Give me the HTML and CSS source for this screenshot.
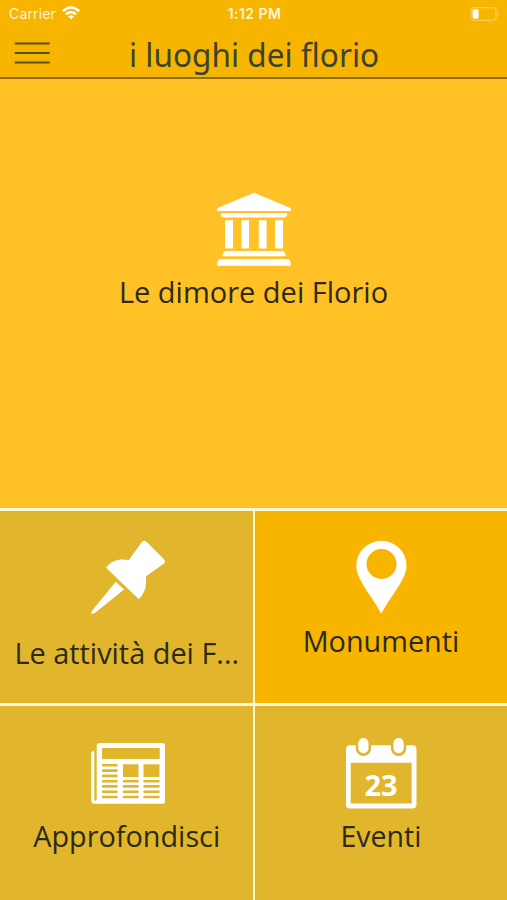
FILE: index.html
```html
<!DOCTYPE html>
<html lang="it">
<head>
<meta charset="utf-8">
<title>i luoghi dei florio</title>
<link rel="stylesheet" href="styles.css">
</head>
<body>
<header class="header">
  <div class="status">
    <div class="status-left"><span class="carrier">Carrier</span>
      <svg class="wifi" viewBox="0 0 18 14" width="18" height="14"><path d="M0 4.3Q9-4 18 4.3L16.2 6.2Q9-.5 1.8 6.2ZM3 7.4Q9 1.9 15 7.4L13.1 9.3Q9 5.6 4.9 9.3ZM6.1 10.4Q9 8 11.9 10.4L9 13.3Z"/></svg>
    </div>
    <span class="clock">1:12 PM</span>
    <svg class="battery" viewBox="0 0 30 14" width="30" height="14"><rect class="shell" x="1" y=".7" width="25" height="12.6" rx="2.5"/><rect x="2.6" y="2.3" width="6" height="9.4" rx="1.4"/><path class="cap" d="M27.5 4.6Q30 7 27.5 9.4Z"/></svg>
  </div>
  <div class="bar">
    <svg class="menu" viewBox="0 0 36 23" width="36" height="23"><path d="M.7 1.5H35.7M.7 11H35.7M.7 20.5H35.7"/></svg>
    <h1 class="title">i luoghi dei florio</h1>
  </div>
</header>
<main class="grid">
  <section class="tile hero">
    <svg class="icon" viewBox="216 191 76 76" width="76" height="76"><path d="M254 192.7Q255 192.8 257 194L290.5 208Q291.8 211 290 211H218Q216.500 211 217.500 208L251 194Q253 192.800 254 192.700ZM220.500 213.300H287.500Q287 217.500 283.500 217.500H224.500Q221 217.500 220.500 213.300ZM225 220.300H233V248.500H225ZM241.300 220.300H249V248.500H241.300ZM258.800 220.300H266.600V248.500H258.800ZM275 220.300H283V248.500H275ZM222.300 256.300Q223 251 225.500 251H282.500Q285 251 285.700 256.300ZM217 265.800Q217.500 259 220 259H288Q290.500 259 291 265.800Z"/></svg>
    <span class="label wide">Le dimore dei Florio</span>
  </section>
  <section class="tile left">
    <svg class="icon" viewBox="89 538 78 78" width="78" height="78"><path d="M142 541.700Q144.400 539.800 146.500 541.800L164 559.300Q166 561.700 163.700 563.700L145.700 576.600C147 584 145.500 593.500 138.700 599L106 567.700C111.500 560 120.500 558.400 128.700 560.200ZM115.700 581.700L124 589.500 95.500 612.500Q93 614 91.700 613.600 90.500 613.200 92.700 610Z"/></svg>
    <span class="label attivita">Le attività dei F...</span>
  </section>
  <section class="tile bright">
    <svg class="icon" viewBox="342 538 78 78" width="78" height="78"><path fill-rule="evenodd" d="M381.300 613.800C371 594.500 356.300 579.500 356.300 565.500A25.100 24.700 0 0 1 406.500 565.500C406.500 579.500 391.500 594.500 381.300 613.800ZM366.500 564A15 15 0 1 0 396.500 564 15 15 0 1 0 366.500 564Z"/></svg>
    <span class="label monumenti">Monumenti</span>
  </section>
  <section class="tile left">
    <svg class="icon" viewBox="89 733 78 78" width="78" height="78"><path fill-rule="evenodd" d="M99 743H162.500Q165 743 165 745.500V801Q165 803.700 162.500 803.700H94.500Q91.300 803.700 91.300 800.500V753Q91.300 751 93 751 94.300 751 94.300 752.500V799Q94.300 800.700 95.500 800.700 96.700 800.700 96.700 799V745.500Q96.700 743 99 743ZM102 748V759H159.700V748Z"/><path class="cut" d="M123 764.300H138.500V777H123ZM143.500 764.300H159.500V777H143.500Z"/><path class="rows" d="M103 765.300H116.500M103 770.600H116.500M103 775.900H116.500M103 781.200H116.500M124 781.200H137.500M144.500 781.200H158.500M103 786.400H116.500M124 786.400H137.500M144.500 786.400H158.500M103 791.700H116.500M124 791.700H137.500M144.500 791.700H158.500M103 797H116.500M124 797H137.500M144.500 797H158.500"/></svg>
    <span class="label approfondisci">Approfondisci</span>
  </section>
  <section class="tile">
    <svg class="icon" viewBox="342 733 78 78" width="78" height="78"><path fill-rule="evenodd" d="M350 745.300H412.500Q416.500 745.300 416.500 749.300V804.500Q416.500 808.500 412.500 808.500H350Q346 808.500 346 804.500V749.300Q346 745.300 350 745.300ZM350.700 762.700V803.500H411.700V762.700Z"/><rect class="ring" x="356.700" y="736.300" width="13.400" height="18.700" rx="6.700"/><rect class="ring" x="391.900" y="736.300" width="13.400" height="18.700" rx="6.700"/><rect x="358.300" y="738" width="10.200" height="15.300" rx="5.100"/><rect x="393.500" y="738" width="10.200" height="15.300" rx="5.100"/><text class="day" x="381" y="795.500" text-anchor="middle">23</text></svg>
    <span class="label eventi">Eventi</span>
  </section>
</main>
</body>
</html>
```
FILE: styles.css
```css
* { box-sizing: border-box; }
body { margin: 0; width: 507px; height: 900px; overflow: hidden; display: flex; flex-direction: column; font-family: "Open Sans", "Noto Sans", sans-serif; }
svg { display: block; fill: #fff; flex: none; }
.header { height: 79px; flex: none; background: #f8b500; border-bottom: 2px solid #8d6e17; }
.status { height: 27px; padding: 0 7px 0 9px; display: grid; grid-template-columns: 1fr auto 1fr; align-items: center; font-family: Inter, sans-serif; color: #fff4d5; }
.status-left { display: flex; align-items: center; gap: 6px; }
.carrier { font-size: 14px; letter-spacing: .15px; }
.clock { font-size: 14px; font-weight: 600; letter-spacing: .45px; }
.wifi { margin-top: -2px; }
.battery { justify-self: end; }
.shell { fill: none; stroke: #fbd46c; stroke-width: 1; }
.cap { fill: #fbd46c; }
.bar { height: 52px; padding-left: 14px; display: flex; align-items: center; }
.menu { fill: none; stroke: #55501f; stroke-width: 2; }
.title { margin: 4px 0 0 79px; font: 400 33px/40px "Noto Sans", sans-serif; color: #3b4430; white-space: nowrap; transform: scaleX(.956); transform-origin: left; }
.grid { flex: 1; display: grid; grid-template-columns: 252.500px 252px; grid-template-rows: 429px 192px 194px; gap: 3px 2.500px; background: #fff8d8; }
.tile { background: #e1b62c; display: flex; flex-direction: column; align-items: center; padding-top: 27px; min-width: 0; }
.left { padding-left: 3px; }
.hero { grid-column: 1 / 3; background: #ffc125; padding-top: 112px; }
.bright { background: #f8b500; }
.label { font-size: 29px; line-height: 40px; color: #2d2a14; white-space: nowrap; }
.hero .label { margin-top: 5px; }
.attivita { margin-top: 17px; font-size: 28.900px; }
.monumenti { margin-top: 5px; font-size: 28.800px; }
.approfondisci, .eventi { margin-top: 5px; }
.approfondisci { font-size: 28.800px; }
.eventi { font-size: 28.500px; }
.left .label { margin-left: -2px; }
.cut { fill: #e1b62c; }
.rows { fill: none; stroke: #e1b62c; stroke-width: 2.600; stroke-linecap: round; }
.ring { fill: #e1b62c; stroke: #e1b62c; stroke-width: 2; }
.day { font: 700 29px "Open Sans", sans-serif; }
```
